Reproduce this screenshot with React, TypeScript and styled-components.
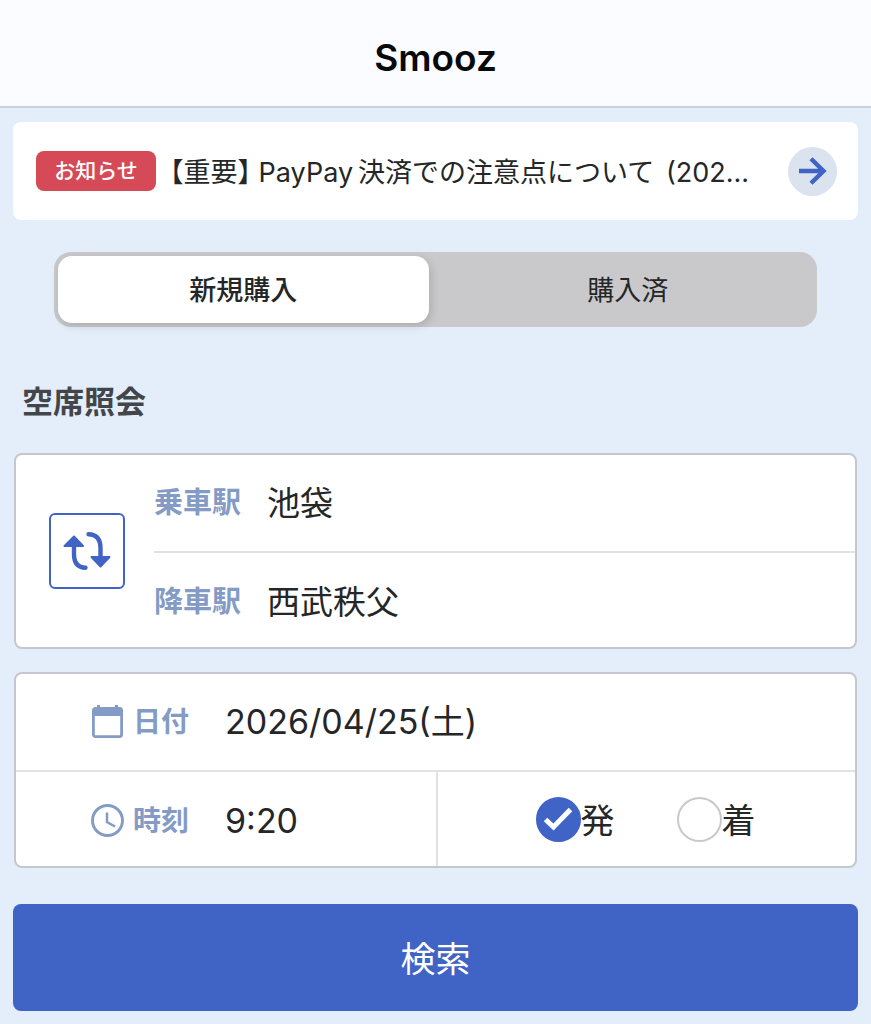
import React, { useState } from "react";
import styled, { createGlobalStyle } from "styled-components";

const color = {
  page: "#e4eefb",
  bar: "#fafcff",
  barLine: "#cbd1db",
  blue: "#4063c6",
  red: "#d64a58",
  label: "#839bc5",
  text: "#242627",
  frame: "#c5c7ce",
  line: "#e2e2e4",
};

const GlobalStyle = createGlobalStyle`
  *, *::before, *::after { box-sizing: border-box; }
  body {
    margin: 0;
    background: ${color.page};
    color: ${color.text};
    font-family: Inter, "Noto Sans CJK JP", sans-serif;
  }
  button, input { font: inherit; color: inherit; margin: 0; }
  button { border: 0; padding: 0; background: none; cursor: pointer; }
`;

const Header = styled.header`
  display: flex;
  align-items: center;
  justify-content: center;
  height: 108px;
  padding-top: 10px;
  background: ${color.bar};
  border-bottom: 2px solid ${color.barLine};
`;

const AppTitle = styled.h1`
  margin: 0;
  font-size: 37px;
  line-height: 48px;
  font-weight: 600;
  color: #08090a;
`;

const Main = styled.main`
  display: flex;
  flex-direction: column;
  padding: 14px 13px 13px;
`;

const Notice = styled.a`
  display: flex;
  align-items: center;
  height: 98px;
  padding: 0 21px 0 23px;
  background: #fff;
  border-radius: 8px;
  color: inherit;
  text-decoration: none;
`;

const Badge = styled.span`
  flex: none;
  width: 120px;
  border-radius: 8px;
  background: ${color.red};
  color: #fff;
  font-size: 21px;
  line-height: 40px;
  font-weight: 500;
  text-align: center;
`;

const NoticeText = styled.span`
  flex: 1;
  min-width: 0;
  margin-left: 14px;
  padding-top: 3px;
  font-size: 27px;
  line-height: 40px;
  white-space: nowrap;
  overflow: hidden;
`;

const Bracketed = styled.span`
  font-feature-settings: "halt";
`;

const Japanese = styled.span`
  margin: 0 4px 0 5px;
`;

const ArrowDisc = styled.span`
  display: flex;
  flex: none;
  align-items: center;
  justify-content: center;
  width: 49px;
  height: 49px;
  border-radius: 50%;
  background: #dbe3ee;
`;

const Tabs = styled.div`
  display: grid;
  grid-template-columns: 1fr 1fr;
  height: 75px;
  margin: 32px 41px 0;
  border-radius: 17px;
  background: #c9c9cc;
`;

const Tab = styled.button<{ $active: boolean }>`
  margin: 4px;
  margin-${(p) => (p.$active ? "right" : "left")}: 7px;
  padding-top: 3px;
  border-radius: 14px;
  font-size: 27px;
  line-height: 40px;
  font-weight: ${(p) => (p.$active ? 500 : 400)};
  background: ${(p) => (p.$active ? "#fff" : "transparent")};
  box-shadow: ${(p) => (p.$active ? "2px 3px 8px rgba(0, 0, 0, 0.14)" : "none")};
`;

const SectionTitle = styled.h2`
  margin: 51px 9px 27px;
  font-size: 31px;
  line-height: 48px;
  font-weight: 700;
  color: #424549;
`;

const Card = styled.section`
  display: flex;
  margin: 0 1px 23px;
  background: #fff;
  border: 2px solid ${color.frame};
  border-radius: 8px;
  overflow: hidden;
`;

const RouteCard = styled(Card)`
  align-items: center;
  padding-left: 33px;
`;

const TimeCard = styled(Card)`
  flex-direction: column;
  margin-bottom: 36px;
`;

const SwapButton = styled.button`
  display: flex;
  flex: none;
  align-items: center;
  justify-content: center;
  width: 76px;
  height: 76px;
  border: 2px solid ${color.blue};
  border-radius: 6px;
`;

const Stations = styled.div`
  flex: 1;
  margin-left: 29px;
`;

const Field = styled.button<{ $ruled?: boolean }>`
  display: flex;
  align-items: center;
  width: 100%;
  height: ${(p) => (p.$ruled ? 98 : 94)}px;
  padding-top: ${(p) => (p.$ruled ? 0 : 3)}px;
  border-bottom: ${(p) => (p.$ruled ? `2px solid ${color.line}` : "0")};
  text-align: left;
`;

const PickerField = styled(Field)`
  padding-left: 75px;
`;

const FieldLabel = styled.span`
  flex: none;
  font-size: 29px;
  line-height: 40px;
  font-weight: 700;
  color: ${color.label};
`;

const StationName = styled.span`
  margin-left: 26px;
  font-size: 33px;
  line-height: 48px;
`;

const PickerLabel = styled(FieldLabel)`
  display: flex;
  align-items: center;
  gap: 8px;
  width: 134px;
  font-size: 28px;
`;

const PickerValue = styled.span`
  font-size: 34px;
  line-height: 48px;
`;

const Split = styled.div`
  display: grid;
  grid-template-columns: 1fr 1fr;
`;

const Choices = styled.div`
  display: flex;
  align-items: center;
  gap: 62px;
  padding-left: 98px;
  border-left: 2px solid ${color.line};
`;

const Choice = styled.label`
  display: flex;
  align-items: center;
  cursor: pointer;
`;

const ChoiceName = styled.span`
  padding-top: 4px;
  font-size: 34px;
  line-height: 48px;
`;

const RadioBox = styled.span`
  display: grid;
  place-items: center;
  width: 45px;
  height: 45px;

  > * { grid-area: 1 / 1; }
  > svg { pointer-events: none; }
`;

const Radio = styled.input`
  appearance: none;
  width: 45px;
  height: 45px;
  border: 2px solid #c9c9cb;
  border-radius: 50%;
  background: #fff;

  &:checked {
    border-color: ${color.blue};
    background: ${color.blue};
  }
`;

const SearchButton = styled.button`
  height: 107px;
  padding-top: 2px;
  border-radius: 8px;
  background: ${color.blue};
  color: #fff;
  font-size: 35px;
  line-height: 48px;
`;

const ArrowIcon = () => (
  <svg width="28" height="28" viewBox="0 0 28 28" fill="none" stroke={color.blue} strokeWidth="4.4" aria-hidden="true">
    <path d="M0 14H25M12 1.8L24.500 14L12 26.200" />
  </svg>
);

const SwapIcon = () => (
  <svg width="48" height="38" viewBox="0 0 48 38" aria-hidden="true">
    <g fill="none" stroke={color.blue} strokeWidth="4.4" strokeLinecap="round">
      <path d="M11 13V22Q11 35.500 22.500 35.800" />
      <path d="M25.500 2.200Q37.500 2.500 37.500 16V25" />
    </g>
    <g fill={color.blue} stroke={color.blue} strokeWidth="2" strokeLinejoin="round">
      <path d="M11 4.500L20 14H1.500Z" />
      <path d="M37.500 34.500L46.500 25H28.500Z" />
    </g>
  </svg>
);

const CalendarIcon = () => (
  <svg width="34" height="34" viewBox="0 0 34 34" fill="none" stroke={color.label} aria-hidden="true">
    <rect x="2.400" y="3.400" width="28.200" height="28.200" rx="2" strokeWidth="2.800" />
    <path d="M2.400 7H30.600" strokeWidth="8" />
    <path d="M7.500 0V6M25.500 0V6" strokeWidth="3" />
  </svg>
);

const ClockIcon = () => (
  <svg width="34" height="34" viewBox="0 0 34 34" fill="none" stroke={color.label} aria-hidden="true">
    <circle cx="16.500" cy="16.500" r="15" strokeWidth="2.900" />
    <path d="M16 8.500V18L24 22.500" strokeWidth="2.500" />
  </svg>
);

const CheckIcon = () => (
  <svg width="30" height="24" viewBox="0 0 30 24" fill="none" stroke="#fff" strokeWidth="5" aria-hidden="true">
    <path d="M2.500 12.500L10.500 20L27.500 2.500" />
  </svg>
);

const tabs = ["新規購入", "購入済"];
const choices = ["発", "着"];

export default function App() {
  const [tab, setTab] = useState(tabs[0]);
  const [choice, setChoice] = useState(choices[0]);
  const [route, setRoute] = useState(["池袋", "西武秩父"]);

  return (
    <>
      <GlobalStyle />
      <Header>
        <AppTitle>Smooz</AppTitle>
      </Header>
      <Main>
        <Notice href="#notice">
          <Badge>お知らせ</Badge>
          <NoticeText>
            <Bracketed>【重要】</Bracketed> PayPay<Japanese>決済での注意点について</Japanese> (202...
          </NoticeText>
          <ArrowDisc>
            <ArrowIcon />
          </ArrowDisc>
        </Notice>

        <Tabs role="tablist">
          {tabs.map((name) => (
            <Tab key={name} role="tab" aria-selected={tab === name} $active={tab === name} onClick={() => setTab(name)}>
              {name}
            </Tab>
          ))}
        </Tabs>

        <SectionTitle>空席照会</SectionTitle>

        <RouteCard>
          <SwapButton aria-label="入れ替え" onClick={() => setRoute([route[1], route[0]])}>
            <SwapIcon />
          </SwapButton>
          <Stations>
            <Field $ruled>
              <FieldLabel>乗車駅</FieldLabel>
              <StationName>{route[0]}</StationName>
            </Field>
            <Field>
              <FieldLabel>降車駅</FieldLabel>
              <StationName>{route[1]}</StationName>
            </Field>
          </Stations>
        </RouteCard>

        <TimeCard>
          <PickerField $ruled>
            <PickerLabel>
              <CalendarIcon />
              日付
            </PickerLabel>
            <PickerValue>2026/04/25(土)</PickerValue>
          </PickerField>
          <Split>
            <PickerField>
              <PickerLabel>
                <ClockIcon />
                時刻
              </PickerLabel>
              <PickerValue>9:20</PickerValue>
            </PickerField>
            <Choices role="radiogroup">
              {choices.map((name) => (
                <Choice key={name}>
                  <RadioBox>
                    <Radio type="radio" name="basis" checked={choice === name} onChange={() => setChoice(name)} />
                    {choice === name && <CheckIcon />}
                  </RadioBox>
                  <ChoiceName>{name}</ChoiceName>
                </Choice>
              ))}
            </Choices>
          </Split>
        </TimeCard>

        <SearchButton>検索</SearchButton>
      </Main>
    </>
  );
}
